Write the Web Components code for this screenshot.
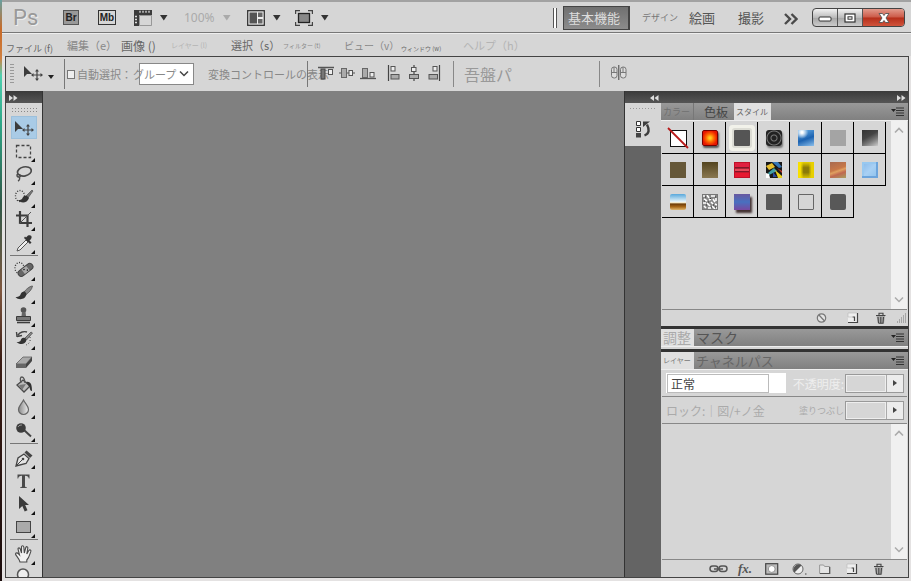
<!DOCTYPE html>
<html lang="ja">
<head>
<meta charset="utf-8">
<title>Ps</title>
<style>
html, body { margin: 0; height: 100%; }
body { font-family: "Noto Sans CJK JP", "Noto Sans", sans-serif; color: #555; overflow: hidden; background: #d6d6d6; }
</style>
</head>
<body>
<ps-app></ps-app>
<script>
const RESET = `
*{box-sizing:border-box}
button{appearance:none;background:none;border:0;padding:0;margin:0;font:inherit;color:inherit;white-space:nowrap;text-align:left;line-height:inherit}
`;
function define(name, css, html) {
  const t = document.createElement('template');
  t.innerHTML = `<style>${RESET}${css}</style>${html}`;
  customElements.define(name, class extends HTMLElement {
    constructor() {
      super();
      this.attachShadow({ mode: 'open' }).appendChild(t.content.cloneNode(true));
    }
  });
}

/* ---------- icons ---------- */
const DK = '#3c3c3c';
const ICONS = {
  move: [20, 20, `<path d="M1 3v11l3-3h5z" fill="${DK}"/><path d="M14 7v10M9 12h10" stroke="#444" stroke-width="1.2"/><path d="M14 6l-2 2.500h4zM14 18l-2-2.500h4zM8 12l2.500-2v4zM20 12l-2.500-2v4z" fill="#444"/>`],
  marquee: [20, 20, `<rect x="2.500" y="4.500" width="14" height="12" fill="none" stroke="#444" stroke-width="1.300" stroke-dasharray="3 2"/>`],
  lasso: [20, 20, `<ellipse cx="10.500" cy="7.500" rx="7" ry="4.500" transform="rotate(-12 10 8)" fill="none" stroke="#4a4a4a" stroke-width="1.700"/><path d="M4 10c-2 1-1 3 1 3s2-2 0-2.500M5 13c1 1 1 3-1 4" fill="none" stroke="#4a4a4a" stroke-width="1.400"/>`],
  quick: [20, 20, `<ellipse cx="6" cy="9" rx="4.500" ry="5.500" fill="none" stroke="#333" stroke-width="1.300" stroke-dasharray="1 1.500"/><path d="M18 3l-6 6 2 2 5-7z" fill="#777" stroke="#444" stroke-width=".6"/><path d="M13 9c-3-1-4 1-5 3-1 1-3 1-4 1 2 3 9 4 11-2z" fill="#333"/>`],
  crop: [20, 20, `<path d="M6 1v12h12M2 5.500h11.500V17" fill="none" stroke="#3c3c3c" stroke-width="2.200"/><path d="M5 14L17 2" stroke="#555" stroke-width="1"/>`],
  dropper: [20, 20, `<path d="M12 7l2 2-8 8-3 1 1-3z" fill="#eee" stroke="#555"/><path d="M10 5l6 6 1.500-1.500-2-2C19 5 18 1 14 2.500l-2 2-1-1z" fill="#333"/>`],
  heal: [20, 20, `<ellipse cx="5.500" cy="8" rx="4.500" ry="5.500" fill="none" stroke="#333" stroke-width="1.300" stroke-dasharray="1 1.500"/><g transform="rotate(-38 11 10)"><rect x="3" y="7" width="17" height="6.500" rx="3.200" fill="#666" stroke="#444"/><rect x="8.500" y="7.500" width="6" height="5.500" fill="#aaa"/><circle cx="10.500" cy="9" r=".7"/><circle cx="12.800" cy="11.500" r=".7"/></g>`],
  brush: [20, 20, `<path d="M18.500 3c-3 0-7 4-8.500 6l2 2.500c3-2 6-5 6.500-8.500z" fill="#888" stroke="#444" stroke-width=".7"/><path d="M11 8.500c-4 0-4 2.500-5 4-1 1.500-3 1.500-4.500 1.500 3 3.500 10 3 11-3z" fill="#333"/>`],
  stamp: [20, 20, `<circle cx="9.500" cy="4" r="2.800" fill="#555"/><path d="M8 6h3.500l.5 4H7.500z" fill="#666"/><path d="M2.500 10.500h14v4h-14z" fill="#777" stroke="#3c3c3c"/><path d="M3 16.500h13" stroke="#3c3c3c" stroke-width="1.600"/>`],
  history: [20, 20, `<path d="M17 3l-6 6 1.500 2 6-7z" fill="#888" stroke="#444" stroke-width=".7"/><path d="M11 9c-3-1-4 1-4.500 3-1 1-3 1-4 1 3 3 9 3 10-2z" fill="#333"/><path d="M4 6c2-3 6-4 9-3M3 8l-.5-5M3 7.500l5-1" fill="none" stroke="#444" stroke-width="1.400"/><path d="M16 8c1 4-1 7-4 8" fill="none" stroke="#444" stroke-dasharray="1 2"/>`],
  eraser: [20, 20, `<path d="M2 12l7-7h9l-6 7z" fill="#aaa" stroke="#555" stroke-width=".7"/><path d="M2 12h10v4H2z" fill="#666"/><path d="M12 12l6-7v4l-6 7z" fill="#444"/>`],
  bucket: [20, 20, `<path d="M3 10l6-5 7 6-6 6z" fill="#bbb" stroke="#4a4a4a" stroke-width="1.300"/><path d="M5 10l7-1-4 6" fill="#777"/><path d="M7 8c-1-4-1-6 1-6s3 4 3 6" fill="none" stroke="#555" stroke-width="1.300"/><path d="M12 7c5-1 6 3 6 9-2 0-2-2-2.500-4" fill="#333"/>`],
  drop: [20, 20, `<path d="M9.500 2c2 4 5 6 5 9.500a5 5 0 0 1-10 0C4.500 8 7.500 6 9.500 2z" fill="url(#g)" stroke="#666" stroke-width="1.200"/><defs><linearGradient id="g"><stop stop-color="#888"/><stop offset="1" stop-color="#eee"/></linearGradient></defs>`],
  dodge: [20, 20, `<path d="M10 9l7 6.500" stroke="#444" stroke-width="2"/><circle cx="7" cy="7" r="4.800" fill="#3c3c3c"/><path d="M4 6c1-2 3-2 4-2" stroke="#999" fill="none"/>`],
  pen: [20, 20, `<path d="M2 18l2-8 6-4 5 4.500-3 5z" fill="#e4e4e4" stroke="#444" stroke-width="1.300"/><path d="M10.500 4.500l2-2 6 5-2.500 2.500z" fill="#444"/><path d="M2 18l6-6" stroke="#444"/><circle cx="9" cy="11" r="1.300" fill="#444"/>`],
  type: [20, 20, `<path d="M3.500 3.500h12v4h-.7c-.5-2-1-2.800-3.800-2.800v10.300c0 1 .5 1.200 2 1.500v.5H6V16.500c1.500-.3 2-.5 2-1.500V4.700c-2.800 0-3.300.8-3.800 2.800h-.7z" fill="#4a4a4a"/>`],
  arrow: [20, 20, `<path d="M5 2v13l3.300-3 2.400 5.500 2.800-1.200L11.200 11H15z" fill="#3c3c3c"/>`],
  rect: [20, 20, `<rect x="2.500" y="4.500" width="14" height="11" fill="#aaa" stroke="#444"/>`],
  hand: [20, 20, `<path d="M6 18C5 14 2 12 1.500 10c0-1.500 2-1.500 3 0l1 1L4 5c0-1.500 1.800-1.500 2.300 0L7.500 9 7.500 3c0-1.600 2-1.600 2.300 0l.5 6 1.500-5.500c.5-1.300 2.300-1 2 .5l-1 6 2-3.500c1-1.200 2.500-.5 2 1-1 2.500-1.500 6-4 8.500V18z" fill="#f2f2f2" stroke="#4a4a4a" stroke-width="1.100"/>`],
  zoom: [20, 20, `<circle cx="9" cy="7.500" r="5.500" fill="#eee" stroke="#555" stroke-width="1.500"/><path d="M12 12l5 5" stroke="#444" stroke-width="2"/>`],
  film: [18, 16, `<path d="M0 0h18v5H5v11H0z" fill="#3c3c3c"/><path d="M6 .8v2M9 .8v2M12 .8v2M15 .8v2M1 6.500h2M1 9.500h2M1 12.500h2" stroke="#ddd" stroke-width="1.300"/><path d="M5.500 5.500h12v10h-12z" fill="#d6d6d6" stroke="#888" stroke-width=".8"/>`],
  down: [8, 6, `<path d="M0 0h7.500L3.800 5.500z" fill="currentColor"/>`],
  downs: [6, 4, `<path d="M0 0h6L3 4z" fill="currentColor"/>`],
  arrange: [18, 16, `<rect x=".7" y=".7" width="16.600" height="14.600" fill="#eee" stroke="#333" stroke-width="1.300"/><path d="M2.500 2.500h7.500v11H2.500z" fill="#555"/><path d="M11 2.500h4.500v4.500H11zM11 9h4.500v4.500H11z" fill="#666"/>`],
  screen: [18, 16, `<path d="M.6 4V.6H5M13 .6h4.400V4M17.400 12v3.400H13M5 15.400H.6V12" fill="none" stroke="#444" stroke-width="1.200"/><rect x="3.500" y="3.500" width="11" height="9" fill="#888" stroke="#222" stroke-width="1.300"/>`],
  more: [14, 12, `<path d="M1 1l5 5-5 5M7.500 1l5 5-5 5" fill="none" stroke="#4a4a4a" stroke-width="2.400"/>`],
  min: [14, 8, `<rect x="1" y="3" width="12" height="4" rx="1" fill="#fff" stroke="#333"/>`],
  max: [12, 10, `<rect x="1" y="1" width="10" height="8" fill="#fff" stroke="#333" stroke-width="1.200"/><rect x="4" y="3.800" width="4" height="2.400" fill="#fff" stroke="#333"/>`],
  close: [12, 12, `<path d="M1 1.500h3.500L6 3.500l1.500-2H11L8 6l3 4.500H7.500L6 8.500l-1.500 2H1L4 6z" fill="#fff" stroke="#555" stroke-width=".9"/>`],
  chev: [10, 8, `<path d="M1 1.500l4 4 4-4" fill="none" stroke="currentColor" stroke-width="1.500"/>`],
  chevup: [10, 8, `<path d="M1 6.500l4-4 4 4" fill="none" stroke="currentColor" stroke-width="1.600"/>`],
  alT: [17, 16, `<path d="M0 2.500h16" stroke="#555" stroke-width="1.500"/><rect x="3" y="4" width="4" height="10" fill="#777" stroke="#444"/><rect x="10.500" y="4.500" width="4" height="5" fill="#eee" stroke="#555"/>`],
  alM: [17, 16, `<path d="M0 8h16" stroke="#555"/><rect x="2.500" y="3.500" width="5" height="9" fill="#aaa" stroke="#666"/><rect x="10" y="5.500" width="3.500" height="5" fill="#eee" stroke="#555"/>`],
  alB: [17, 16, `<path d="M0 13.500h16" stroke="#555" stroke-width="1.300"/><rect x="2.500" y="3.500" width="5" height="9" fill="#aaa" stroke="#666"/><rect x="10" y="7.500" width="4" height="4.500" fill="#eee" stroke="#555"/>`],
  alL: [14, 16, `<path d="M1.500 0v16" stroke="#444" stroke-width="1.200"/><rect x="4" y="1.500" width="4" height="4.500" fill="#eee" stroke="#555"/><rect x="4" y="9.500" width="8" height="4.500" fill="#aaa" stroke="#555"/>`],
  alC: [14, 16, `<path d="M7 0v16" stroke="#444" stroke-width="1.200"/><rect x="4.500" y="2.500" width="4.500" height="4" fill="#eee" stroke="#555"/><rect x="2.500" y="9.500" width="9" height="4" fill="#aaa" stroke="#555"/>`],
  alR: [14, 16, `<path d="M12.500 0v16" stroke="#444" stroke-width="1.200"/><rect x="6" y="1.500" width="4" height="4.500" fill="#eee" stroke="#555"/><rect x="2" y="9.500" width="8.500" height="4.500" fill="#aaa" stroke="#555"/>`],
  auto: [18, 16, `<g stroke="#777"><rect x="1.500" y="2" width="5.500" height="11" rx="2.500" fill="#ddd"/><rect x="10.500" y="2" width="5.500" height="11" rx="2.500" fill="#ddd"/><path d="M1 7.500h6M10 7.500h6M4 2v6M13 2v6"/></g><path d="M8.800 0v15" stroke="#444"/>`],
  next: [9, 6, `<path d="M0 0l4 3-4 3zM4.500 0l4 3-4 3z" fill="#ddd"/>`],
  prev: [9, 6, `<path d="M4 0L0 3l4 3zM8.500 0l-4 3 4 3z" fill="#ddd"/>`],
  menu: [14, 10, `<path d="M0 2h5L2.500 5z" fill="#222"/><path d="M5 1h8M5 3.500h8M5 6h8M5 8.500h8" stroke="#333"/>`],
  dock: [16, 18, `<path d="M1.500 1.500h4v4h-4zM1.500 7.500h4v4h-4z" fill="#fff" stroke="#333"/><path d="M1 13h5v4.500H1z" fill="#444"/><path d="M9.500 15.500c5-2 5-6 2.500-11" fill="none" stroke="#3c3c3c" stroke-width="2.400"/><path d="M8 7V1.500h7z" fill="#3c3c3c"/>`],
  none: [12, 12, `<circle cx="5.500" cy="6" r="4.200" fill="#e4e4e4" stroke="#777" stroke-width="1.200"/><path d="M3 3l5.500 6" stroke="#777" stroke-width="1.200"/>`],
  page: [12, 12, `<path d="M1 1h9v9H5L1 10z" fill="#eee"/><path d="M10.500 1v9.500H1M5.500 5h2v4" fill="none" stroke="#444" stroke-width="1.200"/><path d="M5 5H1V1h9" fill="none" stroke="#bbb" stroke-width=".7"/>`],
  trash: [12, 12, `<path d="M1.500 4h8.500l-1 7.500h-6z" fill="#aaa"/><path d="M1 3.500h9.500M4 3V1.200h4V3M3 5l.5 6M5.800 5v6M8.500 5L8 11M3.500 11.200h5" fill="none" stroke="#444" stroke-width="1.100"/>`],
  grip: [10, 10, `<path d="M8 1h1M6 3h3M4 5h5M2 7h7M0 9h9" stroke="#777" stroke-dasharray="1 1"/>`],
  link: [19, 10, `<g fill="none" stroke="#555" stroke-width="1.500"><rect x="1" y="2" width="8" height="5.500" rx="2.700"/><rect x="10" y="2" width="8" height="5.500" rx="2.700"/><path d="M5 5h9"/></g>`],
  mask: [14, 12, `<rect x=".7" y=".7" width="12" height="10.500" fill="#bbb" stroke="#444" stroke-width="1.200"/><circle cx="6.700" cy="6" r="3.400" fill="#fff" stroke="#777" stroke-width=".7"/>`],
  adjust: [15, 12, `<circle cx="6" cy="6" r="5" fill="#eee" stroke="#666"/><path d="M2.500 9.500A5 5 0 0 1 9.500 2.500z" fill="#555"/><path d="M13 11h1.500" stroke="#444"/>`],
  folder: [12, 12, `<path d="M.6 2h4l1 1.500h5v7H.6z" fill="#e4e4e4" stroke="#999"/><path d="M10.700 4v6.500H1" fill="none" stroke="#555" stroke-width="1.200"/>`],
  tri: [4, 6, `<path d="M0 0l4 3-4 3z" fill="#444"/>`],
};
customElements.define('ps-icon', class extends HTMLElement {
  constructor() { super(); this.attachShadow({ mode: 'open' }); }
  connectedCallback() {
    const [w, h, body] = ICONS[this.getAttribute('name')];
    this.shadowRoot.innerHTML = `<style>:host{display:inline-block;flex:none;line-height:0}svg{display:block}</style><svg width="${w}" height="${h}" viewBox="0 0 ${w} ${h}" aria-hidden="true">${body}</svg>`;
  }
});

/* ---------- title bar ---------- */
define('ps-title-bar', `
:host{display:grid;grid-template-columns:50px 35px 36px 50px 63px 48px 1fr auto;align-items:center;height:33px;padding:1px 6px 0 11px;border-top:2px solid #a2a2a2;border-bottom:1px solid #777;background:#d6d6d6}
.logo{font:22px/26px Roboto,sans-serif;color:#999;text-shadow:1px 1px #eee}
.b{width:16px;height:15px;font:bold 10px/13px "Liberation Sans",sans-serif;color:#222;background:#999;border:1px solid #555;text-align:center}
.b.m{width:18px;background:#d6d6d6;border-color:#333}
.g{display:flex;align-items:center;gap:8px;color:#333}
.z{font:12px/16px "Noto Sans",sans-serif;color:#aaa}
.right{display:grid;grid-template-columns:10px 79px 47px 49px 46px 28px auto;align-items:center;line-height:18px}
.bars{width:4px;height:20px;border:solid #555;border-width:0 1px;background:#fff}
.on{width:67px;height:24px;padding:0 4px;background:linear-gradient(#707070,#8c8c8c);border:2px solid #444;border-width:1px 2px 1px 1px;color:#ddd;font-size:13px}
.s{font-size:9px;color:#777}.n{font-size:13px}
.win{display:flex;height:19px;border:1px solid #444;border-radius:4px;overflow:hidden;background:linear-gradient(#f2f2f2,#bbb 50%,#a8a8a8 55%,#ccc)}
.win button{width:25px;display:grid;place-items:center;border-right:1px solid #555}
.win .x{width:41px;border:0;background:linear-gradient(#e29a8c,#cc5a48 48%,#b52e1a 52%,#d0543c)}
`, `
<span class="logo">Ps</span>
<button class="b">Br</button><button class="b m">Mb</button>
<button class="g" aria-label="エクストラ"><ps-icon name="film"></ps-icon><ps-icon name="down"></ps-icon></button>
<button class="g z">100%<ps-icon name="down"></ps-icon></button>
<button class="g" aria-label="配置"><ps-icon name="arrange"></ps-icon><ps-icon name="down"></ps-icon></button>
<button class="g" aria-label="スクリーン"><ps-icon name="screen"></ps-icon><ps-icon name="down"></ps-icon></button>
<div class="right"><span class="bars"></span><button class="on">基本機能</button><button class="s">デザイン</button><button class="n">絵画</button><button class="n">撮影</button><button aria-label="その他"><ps-icon name="more"></ps-icon></button>
<div class="win"><button aria-label="最小化"><ps-icon name="min"></ps-icon></button><button aria-label="最大化"><ps-icon name="max"></ps-icon></button><button class="x" aria-label="閉じる"><ps-icon name="close"></ps-icon></button></div></div>
`);

/* ---------- menu bar ---------- */
define('ps-menu-bar', `
:host{display:grid;grid-template-columns:61px 54px 50px 60px 52px 61px 57px 62px auto;justify-content:start;align-items:center;height:23px;padding:0 4px;line-height:15px;font-size:11px;color:#888;background:#d6d6d6;border-top:1px solid #eee}
.t{font-size:6px}.f7{font-size:7px}.s{font-size:9px}.l{align-self:end;line-height:14px}.d{color:#666}.f{color:#b4b4b4}.m{font-size:12px}.v{font-size:10px}
`, `
<button class="s l d">ファイル (f)</button><button>編集（e）</button><button class="m d">画像 ()</button><button class="f7 f">レイヤー (l)</button><button class="d">選択（s）</button><button class="t">フィルター (t)</button><button class="v">ビュー（v）</button><button class="t l d">ウィンドウ (w)</button><button class="f">ヘルプ（h）</button>
`);

/* ---------- options bar ---------- */
define('ps-options-bar', `
:host{display:grid;grid-template-columns:13px 25px 16px 68px 76px 99px 11px 67px 58px auto;justify-content:start;align-items:center;height:34px;padding-left:4px;background:#d6d6d6;color:#888;font-size:11px;white-space:nowrap}
.grip{width:4px;height:22px;background:radial-gradient(circle,#999 1px,transparent 1px) 0 0/2px 3px}
.sep{width:1px;height:26px;background:#777}
label.c{display:flex;align-items:center;gap:2px;border-left:1px solid #777;height:30px;padding-left:2px}
input{appearance:none;width:9px;height:9px;margin:0;border:1px solid #777;background:#eee}
.sel{display:grid;align-items:center;width:62px}
.sel>*{grid-area:1/1}
.box{height:22px;margin-left:7px;background:#fff;border:1px solid #888;display:flex;align-items:center;justify-content:flex-end;padding-right:4px;color:#444}
select{appearance:none;background:none;border:0;margin:0;padding:0 0 0 1px;font:inherit;color:#888;width:62px;height:22px}
.g{display:flex;align-items:center}
.g.a{gap:4px}.g.b{gap:6px;padding-left:2px}.g.e{padding-left:10px}
.arr{display:flex;align-items:center;border-left:1px solid #888;height:26px;padding-left:10px;font-size:16px;color:#999;width:146px}
`, `
<span class="grip"></span><button aria-label="移動ツール"><ps-icon name="move"></ps-icon></button><button aria-label="ツール一覧" style="color:#222"><ps-icon name="downs"></ps-icon></button>
<label class="c"><input type="checkbox">自動選択：</label>
<div class="sel"><span class="box"><ps-icon name="chev"></ps-icon></span><select aria-label="自動選択"><option>グループ</option></select></div>
<span>変換コントロールの表示</span><span class="sep"></span>
<div class="g a"><button aria-label="上端揃え"><ps-icon name="alT"></ps-icon></button><button aria-label="垂直方向中央揃え"><ps-icon name="alM"></ps-icon></button><button aria-label="下端揃え"><ps-icon name="alB"></ps-icon></button></div>
<div class="g b"><button aria-label="左端揃え"><ps-icon name="alL"></ps-icon></button><button aria-label="水平方向中央揃え"><ps-icon name="alC"></ps-icon></button><button aria-label="右端揃え"><ps-icon name="alR"></ps-icon></button></div>
<div class="g e"><span class="arr">吾盤パ</span><span class="arr"><button aria-label="自動整列"><ps-icon name="auto"></ps-icon></button></span></div>
`);

/* ---------- tool box ---------- */
customElements.define('ps-tool', class extends HTMLElement {
  constructor() { super(); this.attachShadow({ mode: 'open' }); }
  connectedCallback() {
    const n = this.getAttribute('name');
    this.shadowRoot.innerHTML = `<style>${RESET}
:host{display:block;height:23px;flex:none}
button{position:relative;display:grid;place-items:center;width:26px;height:23px}
:host([active]) button{background:#a9cbe6;box-shadow:inset 0 0 0 1px #9cc0dc}
:host(:not([active])) button::after{content:"";position:absolute;right:2px;bottom:0;border:2px solid;border-color:transparent #111 #111 transparent}
</style><button aria-label="${n}"><ps-icon name="${n}"></ps-icon></button>`;
  }
});
define('ps-toolbox', `
:host{display:flex;flex-direction:column;background:#d6d6d6;border-right:1px solid #333;overflow:hidden;min-height:0}
.head{height:12px;flex:none;background:linear-gradient(#3a3a3a,#555);padding:3px;line-height:0}
.grip{height:5px;margin:4px 5px 4px;flex:none;background:radial-gradient(circle,#888 1px,transparent 1px) 0 0/3px 3px}
.tools{display:flex;flex-direction:column;padding-left:5px}
hr{width:28px;height:4px;margin:0 0 0 -1px;border:0;flex:none;background:linear-gradient(#777,#777) 0 1px/100% 1px no-repeat}
`, `
<button class="head" aria-label="展開"><ps-icon name="next"></ps-icon></button><div class="grip"></div>
<div class="tools"><ps-tool name="move" active></ps-tool><ps-tool name="marquee"></ps-tool><ps-tool name="lasso"></ps-tool><ps-tool name="quick"></ps-tool><ps-tool name="crop"></ps-tool><ps-tool name="dropper"></ps-tool><hr>
<ps-tool name="heal"></ps-tool><ps-tool name="brush"></ps-tool><ps-tool name="stamp"></ps-tool><ps-tool name="history"></ps-tool><ps-tool name="eraser"></ps-tool><ps-tool name="bucket"></ps-tool><ps-tool name="drop"></ps-tool><ps-tool name="dodge"></ps-tool><hr>
<ps-tool name="pen"></ps-tool><ps-tool name="type"></ps-tool><ps-tool name="arrow"></ps-tool><ps-tool name="rect"></ps-tool><hr>
<ps-tool name="hand"></ps-tool><ps-tool name="zoom"></ps-tool></div>
`);

/* ---------- panel parts ---------- */
define('ps-scroll', `
:host{display:flex;flex-direction:column;justify-content:space-between;align-items:center;width:16px;background:#f0f0f0;color:#aaa;padding:5px 0}
button{line-height:0}
`, `<button aria-label="上へ"><ps-icon name="chevup"></ps-icon></button><button aria-label="下へ"><ps-icon name="chev"></ps-icon></button>`);

define('ps-panel', `
:host{display:flex;flex-direction:column;background:#d6d6d6;min-height:0}
.tabs{display:flex;height:18px;flex:none;padding-right:3px;background:linear-gradient(#999,#808080);border-bottom:1px solid #eee;align-items:stretch}
.sp{flex:1}
.tabs>button{display:grid;place-items:center}
`, `<div class="tabs"><slot name="tab"></slot><span class="sp"></span><button aria-label="パネルメニュー"><ps-icon name="menu"></ps-icon></button></div><slot></slot>`);

define('ps-tab', `
:host{display:block;font-size:13px;line-height:17px;color:#6c6c6c;flex:none}
button{height:17px;width:100%;padding:0 2px;display:block;overflow:visible}
:host([active]){background:#e0e0e0;color:#888}
`, `<button role="tab"><slot></slot></button>`);

/* ---------- style swatches ---------- */
const svg = s => `<svg width="16" height="16" viewBox="0 0 16 16">${s}</svg>`;
const SW = [
  'none',
  'radial-gradient(circle,#ffc820 10%,#ff6a00 40%,#e81800 75%);border:1px solid #700;border-radius:2px;box-shadow:1px 2px 2px #555',
  '#555;box-shadow:0 0 0 2px #dcdcd4,0 0 0 5px #f2f2ea;border-radius:1px',
  'repeating-radial-gradient(circle,#222 0 2px,#777 3px,#222 4px);border-radius:3px;box-shadow:1px 2px 2px #777',
  'radial-gradient(circle at 25% 15%,#fff 5%,transparent 35%),linear-gradient(160deg,#6ab0e8,#1c62b0 55%,#8cc0ec)',
  '#a4a4a4',
  'linear-gradient(150deg,#333,#444 40%,#777 65%,#ccc)',
  '#665838',
  'linear-gradient(#54451f,#8a7850)',
  'linear-gradient(#e02040 0 25%,#801828 30% 38%,#e84858 42% 55%,#801828 58% 64%,#e81830 70%);border:1px solid #c01028',
  'none',
  'linear-gradient(90deg,#f8e000 15%,transparent 35% 65%,#e8d000 85%),linear-gradient(#e8d000,#8a7a08 35% 65%,#d8c000)',
  'linear-gradient(160deg,#a86a50,#c87848 45%,#e0a060 55%,#c06850 70%,#a8a060)',
  'linear-gradient(135deg,#88b8e8,#a8d0f4 50%,#8cc0ec);box-shadow:inset -2px -2px #6ca4dc,inset 2px 2px #98c8f0',
  'linear-gradient(#58a8dc,#e8f4f8 48%,#f8e8c0 55%,#6c3c08 62%,#a86818 80%,#e0b870);border-radius:2px',
  'none',
  'linear-gradient(#6858a0,#4870c0 50%,#7848a0);box-shadow:2px 3px 2px #433',
  '#585858;border-radius:1px',
  'none;border:1px solid #666;border-radius:1px',
  '#585858;border-radius:2px',
];
const DRAWN = {
  0: `<svg width="22" height="22" viewBox="0 0 22 22"><rect x="3.500" y="3.500" width="16" height="16" fill="#fff" stroke="#111"/><path d="M1 1l20 20" stroke="#b81818" stroke-width="1.800"/></svg>`,
  10: svg(`<path fill="#181818" d="M0 0h16v16H0z"/><path d="M0 4l6-3 3 4-6 3z" fill="#e8c030"/><path d="M6 0h6l4 5-3 1z" fill="#3878b8"/><path d="M2 11l6-5 3 3-8 4z" fill="#40a0a8"/><path d="M0 11l3 1 1 4H0z" fill="#fff"/><path d="M9 8l7 6v2h-4z" fill="#e8d020"/><path d="M7 10l4 5H7z" fill="#2848a0"/><path d="M11 6l5 3v2z" fill="#c83828"/>`),
  15: svg(`<path fill="#888" d="M0 0h16v16H0z"/><path d="M1 2h2M5 1l2 3M9 2h4M14 4v3M2 5l3 2M7 6l2-1M11 5l2 3M1 9h3M5 9l3 3M9 8l2 2M13 10l2 1M2 12l2 2M6 14h3M10 12l3 3M14 14h1" stroke="#fff" stroke-width="1.600"/><path d="M3 3h1M8 4l1 1M13 3h1M2 7h1M6 8h1M11 11h1M4 11h1M9 13h1M13 13h1" stroke="#333"/><rect x=".5" y=".5" width="15" height="15" fill="none" stroke="#777"/>`),
};
customElements.define('ps-swatch', class extends HTMLElement {
  constructor() { super(); this.attachShadow({ mode: 'open' }); }
  connectedCallback() {
    const i = +this.getAttribute('index');
    this.shadowRoot.innerHTML = `<style>${RESET}
:host{display:block;border:solid #000;border-width:0 1px 1px 0}
button{display:grid;place-items:center;width:100%;height:100%}
i{display:block;width:16px;height:16px;background:${SW[i]}}</style><button aria-label="スタイル ${i + 1}">${DRAWN[i] || '<i></i>'}</button>`;
  }
});
define('ps-styles', `
:host{display:flex;flex-direction:column;padding:0 1px 0 1px}
.area{display:flex;justify-content:space-between;height:189px;border-bottom:1px solid #888}
.grid{display:grid;grid-template-columns:repeat(7,32px);grid-auto-rows:32px;align-content:start;padding-top:1px}
.foot{display:grid;grid-template-columns:31px 28px 22px 10px;justify-content:end;align-items:center;height:16px}
.foot ps-icon{display:block}
`, `<div class="area"><div class="grid">${SW.map((_, i) => `<ps-swatch index="${i}"></ps-swatch>`).join('')}</div><ps-scroll></ps-scroll></div>
<div class="foot"><button aria-label="スタイルを消去"><ps-icon name="none"></ps-icon></button><button aria-label="新規スタイル"><ps-icon name="page"></ps-icon></button><button aria-label="スタイルを削除"><ps-icon name="trash"></ps-icon></button><ps-icon name="grip"></ps-icon></div>`);

/* ---------- layers ---------- */
define('ps-layers', `
:host{display:flex;flex-direction:column;flex:1;min-height:0;padding:0 1px}
.row{display:flex;align-items:center;height:27px;flex:none;border-bottom:1px solid #888;padding:0 3px 0 4px;font-size:12px;white-space:nowrap}
.mode{background:#fff;width:120px;height:20px;display:flex;align-items:center;padding-left:1px;flex:none}
select{appearance:none;width:102px;height:19px;margin:0;padding:0 3px;font:12px/17px "Noto Sans CJK JP",sans-serif;color:#444;border:1px solid #bbb;background:#fff}
label{flex:1;min-width:0;display:flex;justify-content:flex-end;align-items:center;gap:1px}
.op{color:#eee}.fill{font-size:9px;color:#aaa}
.lock{color:#aaa}
.f{display:flex;width:59px;height:19px;flex:none;border:1px solid #999}
input{flex:1;min-width:0;margin:0;padding:0;border:1px solid #eee;background:#d6d6d6}
.f button{width:17px;display:grid;place-items:center;background:#ececec;border-left:1px solid #aaa}
.list{flex:1;min-height:0;display:flex;justify-content:flex-end;border-bottom:1px solid #888}
.foot{height:17px;flex:none;display:grid;grid-template-columns:29px 27px 27px 27px 27px 27px auto;justify-content:end;align-items:center;padding-right:22px}
.foot ps-icon{display:block}
.fx{font:italic bold 13px/15px "Liberation Serif",serif;color:#555}
`, `
<div class="row"><div class="mode"><select aria-label="描画モード"><option>正常</option></select></div><label class="op">不透明度:<span class="f"><input aria-label="不透明度"><button aria-label="不透明度を変更"><ps-icon name="tri"></ps-icon></button></span></label></div>
<div class="row"><span class="lock">ロック:｜図/+ノ金</span><label class="fill">塗りつぶし<span class="f"><input aria-label="塗りつぶし"><button aria-label="塗りを変更"><ps-icon name="tri"></ps-icon></button></span></label></div>
<div class="list"><ps-scroll></ps-scroll></div>
<div class="foot"><button aria-label="レイヤーをリンク"><ps-icon name="link"></ps-icon></button><button class="fx">fx.</button><button aria-label="マスクを追加"><ps-icon name="mask"></ps-icon></button><button aria-label="調整レイヤー"><ps-icon name="adjust"></ps-icon></button><button aria-label="新規グループ"><ps-icon name="folder"></ps-icon></button><button aria-label="新規レイヤー"><ps-icon name="page"></ps-icon></button><button aria-label="レイヤーを削除"><ps-icon name="trash"></ps-icon></button></div>
`);

/* ---------- right dock ---------- */
define('ps-dock', `
:host{display:grid;grid-template-columns:36px minmax(0,1fr);grid-template-rows:12px minmax(0,1fr);background:#646464;border-left:1px solid #333;min-height:0}
.head{grid-column:1/-1;display:flex;justify-content:space-between;padding:3px 2px 3px 25px;background:linear-gradient(#3a3a3a,#555);line-height:0}
.mini{height:43px;background:#d6d6d6;display:grid;grid-template-rows:12px 1fr;justify-items:center}
.grip{width:28px;height:4px;margin-top:4px;background:radial-gradient(circle,#999 1px,transparent 1px) 0 0/3px 3px}
.panels{display:flex;flex-direction:column;gap:3px;background:#333;min-height:0}
.last{flex:1}
.a{width:33px}.b{width:40px}.c{width:37px}.s{font-size:9px}
.color{color:#707070;border-right:1px solid #777}
`, `
<div class="head"><button aria-label="展開"><ps-icon name="prev"></ps-icon></button><button aria-label="たたむ"><ps-icon name="next"></ps-icon></button></div>
<div class="mini"><span class="grip"></span><button aria-label="ヒストリー"><ps-icon name="dock"></ps-icon></button></div>
<div class="panels">
<ps-panel><ps-tab slot="tab" class="a s color">カラー</ps-tab><ps-tab slot="tab" class="b" style="font-size:12px;color:#444;padding-left:8px">色板</ps-tab><ps-tab slot="tab" class="c" active style="font-size:8px;color:#666">スタイル</ps-tab><ps-styles></ps-styles></ps-panel>
<ps-panel style="padding-bottom:2px"><ps-tab slot="tab" class="a" active style="font-size:14px;color:#aaa">調整</ps-tab><ps-tab slot="tab" class="b" style="font-size:14px;color:#555">マスク</ps-tab></ps-panel>
<ps-panel class="last"><ps-tab slot="tab" class="a" active style="font-size:7px;color:#777">レイヤー</ps-tab><ps-tab slot="tab" style="color:#666">チャネルパス</ps-tab><ps-layers></ps-layers></ps-panel>
</div>
`);

/* ---------- window ---------- */
define('ps-app', `
:host{display:grid;grid-template-columns:2px 1fr;height:100vh}
.edge{background:linear-gradient(#68a0a0,#c86a28 5%,#d08040 10%,#50d0b0 13%,#30a888 21%,#305848 35%,#805840 50%,#3a1c14 62%,#1a0c0c)}
.win{display:flex;flex-direction:column;min-width:0;min-height:0;background:#e4e2e2}
.frame{flex:1;min-height:0;margin:0 2px 3px 3px;border:1px solid #444;display:grid;grid-template-rows:34px minmax(0,1fr)}
.body{display:grid;grid-template-columns:37px 1fr 284px;grid-template-rows:minmax(0,1fr);min-height:0}
.canvas{background:#808080}
`, `
<div class="edge"></div>
<div class="win"><ps-title-bar></ps-title-bar><ps-menu-bar></ps-menu-bar>
<div class="frame"><ps-options-bar></ps-options-bar><div class="body"><ps-toolbox></ps-toolbox><main class="canvas"></main><ps-dock></ps-dock></div></div></div>
`);
</script>
</body>
</html>
